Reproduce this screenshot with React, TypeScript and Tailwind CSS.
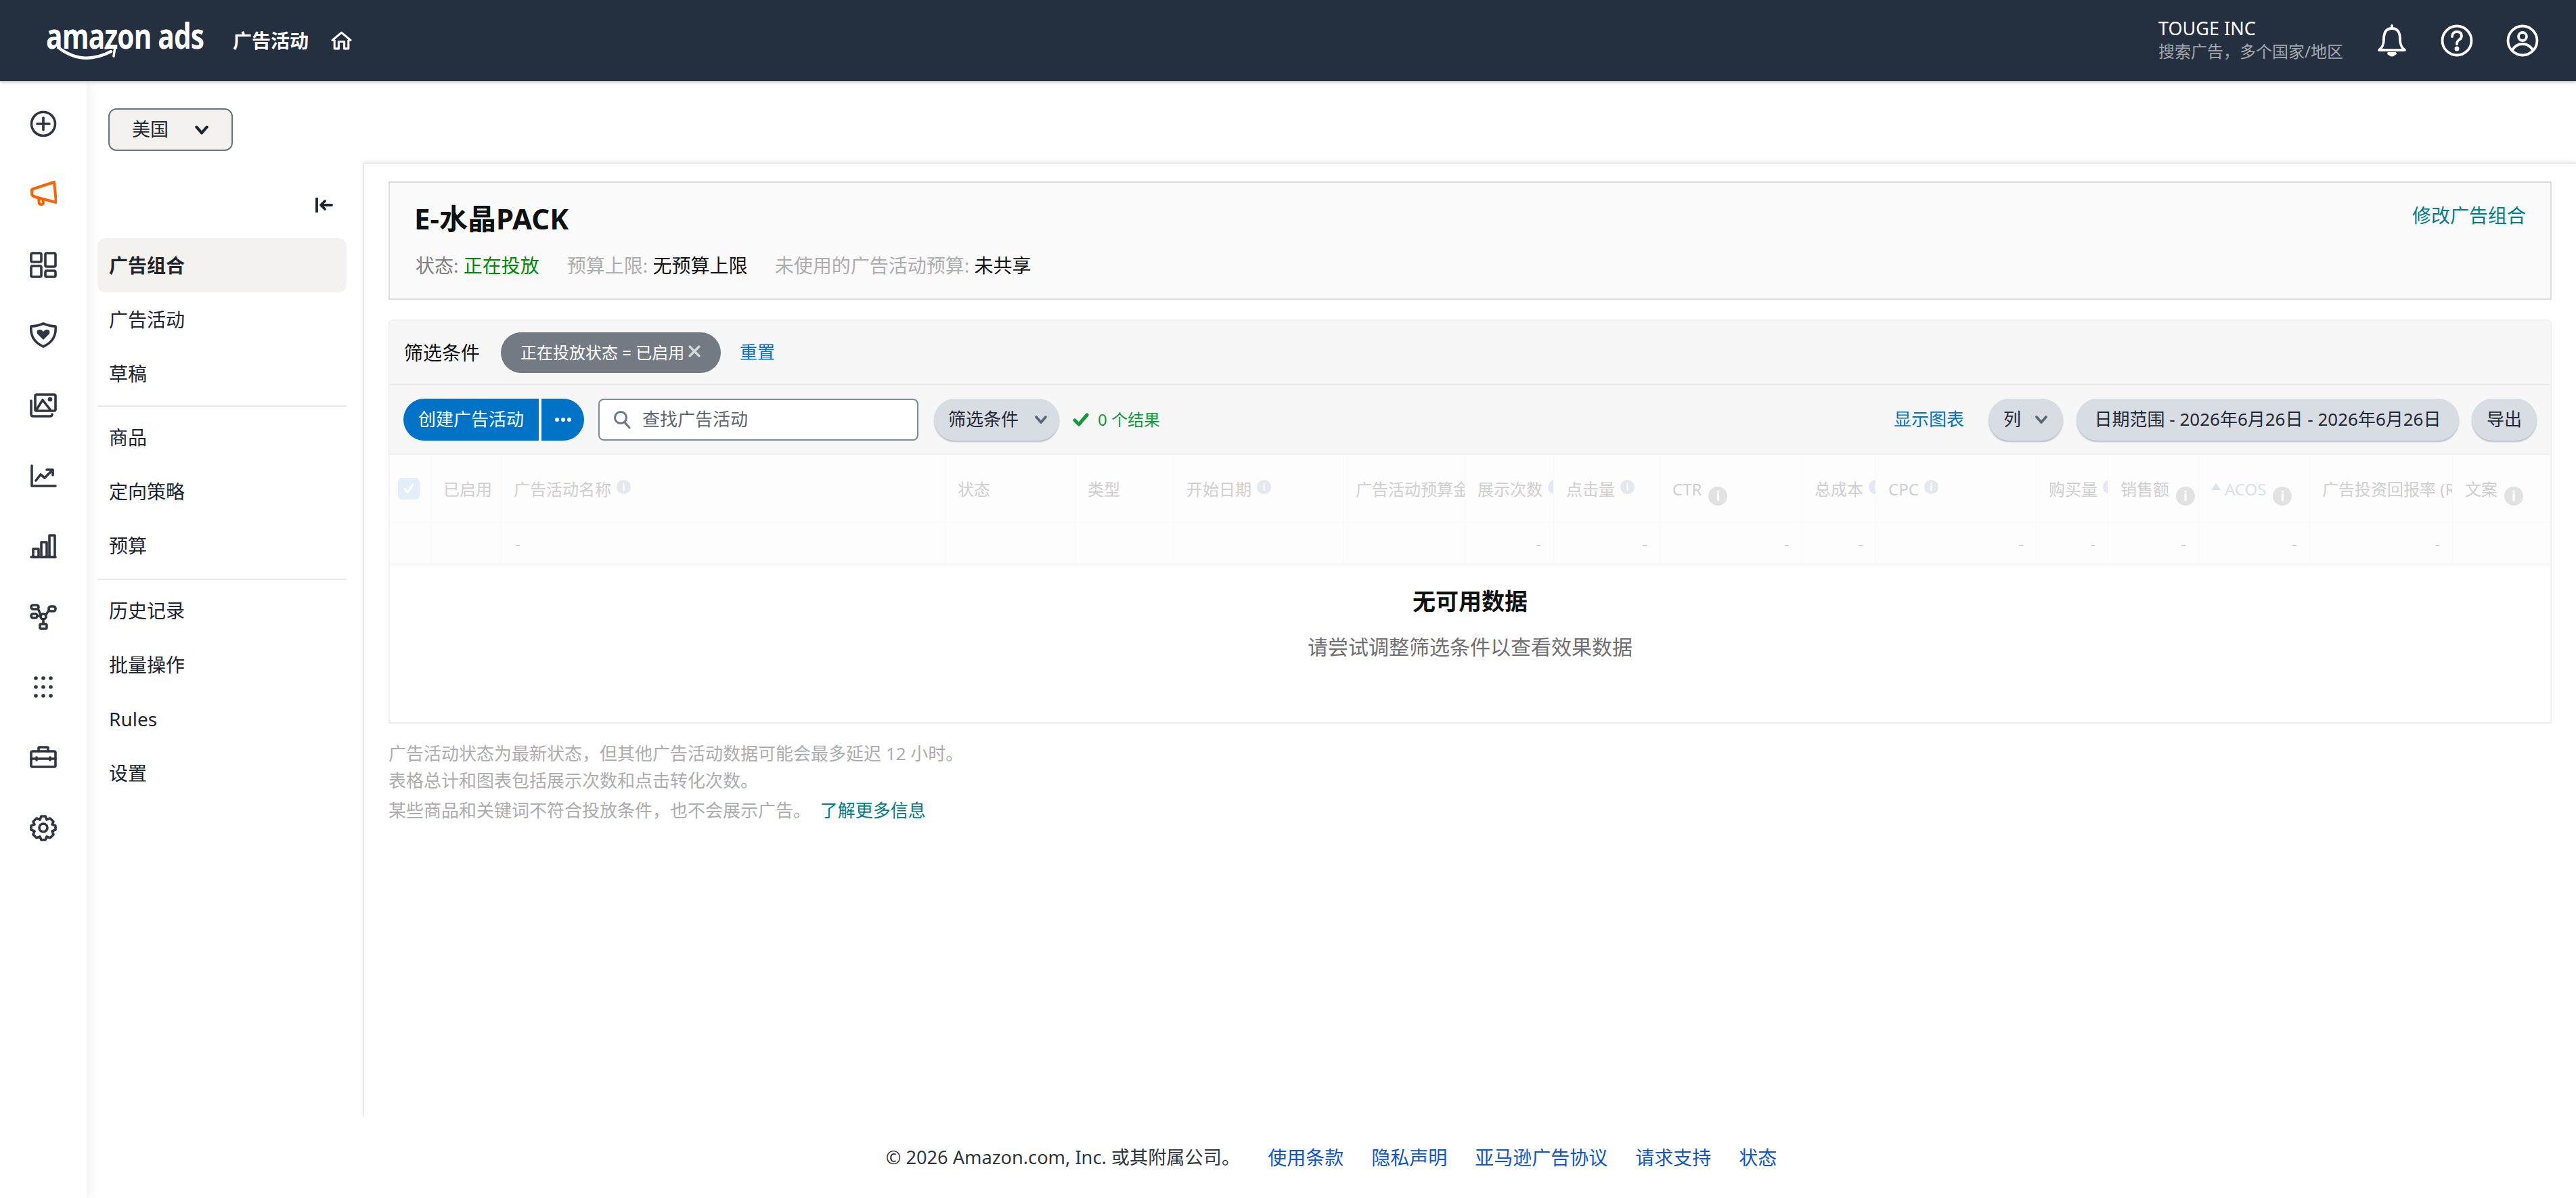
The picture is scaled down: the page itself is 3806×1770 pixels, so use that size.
import React from "react";

const I = ({ children, className = "" }: { children: React.ReactNode; className?: string }) => (
  <svg viewBox="0 0 40 40" fill="none" stroke="currentColor" strokeWidth="3.6" strokeLinecap="round" strokeLinejoin="round" className={"w-[40px] h-[40px] " + className}>
    {children}
  </svg>
);

const railIcons = [
  <I><circle cx="20" cy="20" r="17.5" /><path d="M20 11v18M11 20h18" /></I>,
  <I className="text-[#ff6200]"><path d="M3 16 Q2 13 5 12 L36 2 L39 32 L12 25 L6 23 Q3 22 3 19Z" strokeWidth="4" /><path d="M13 26 L14 34 Q18 37 20 33 L19 27" strokeWidth="4" /></I>,
  <I><rect x="2" y="3" width="15" height="13" rx="2" /><rect x="23" y="3" width="15" height="20" rx="2" /><rect x="2" y="22" width="15" height="16" rx="2" /><rect x="23" y="29" width="15" height="9" rx="2" /></I>,
  <I><path d="M20 3 Q29 7 38 7 Q40 28 20 37 Q0 28 2 7 Q11 7 20 3Z" /><path d="M20 27 L11 18 Q9 12 15 12 Q18 12 20 15 Q22 12 25 12 Q31 12 29 18Z" fill="currentColor" stroke="none" /></I>,
  <I><rect x="8" y="4" width="30" height="24" rx="2" /><path d="M2 13 V33 Q2 36 5 36 H30 Q33 36 33 33" /><path d="M10 26 L19 12 L30 26" /><circle cx="30" cy="11" r="1.5" fill="currentColor" /></I>,
  <I><path d="M3 5 V35 H38" /><path d="M9 27 L16 18 L22 23 L33 12" /><path d="M25 11 H34 V19" /></I>,
  <I><path d="M2 36 H38" /><rect x="5" y="24" width="8" height="12" /><rect x="17" y="14" width="8" height="22" /><rect x="29" y="4" width="8" height="32" /></I>,
  <I><rect x="2" y="3" width="11" height="6" rx="3" /><rect x="2" y="16" width="9" height="6" rx="3" /><rect x="28" y="5" width="10" height="7" rx="3" /><rect x="15" y="31" width="10" height="7" rx="2" /><circle cx="20" cy="20" r="4" /><path d="M12 8 L16 17 M11 19 H16 M28 11 L24 17 M20 24 V31" /></I>,
  <I>{[9, 20, 31].flatMap((x) => [7, 20, 33].map((y) => <circle key={x + "-" + y} cx={x} cy={y} r="2.8" fill="currentColor" stroke="none" />))}</I>,
  <I><rect x="2" y="11" width="36" height="23" rx="2" /><path d="M13 11 V6 Q13 5 14 5 H26 Q27 5 27 6 V11" /><path d="M2 22 H38" /><path d="M10 20v4M30 20v4" /></I>,
  <I><circle cx="20" cy="20" r="6" /><path d="M17 3 H23 L25 8 L30 6 L35 11 L33 15 L38 17 V23 L33 25 L35 30 L30 35 L25 33 L23 38 H17 L15 33 L10 35 L5 30 L7 25 L2 23 V17 L7 15 L5 11 L10 6 L15 8Z" /></I>,
];

const navGroups = [["广告组合", "广告活动", "草稿"], ["商品", "定向策略", "预算"], ["历史记录", "批量操作", "Rules", "设置"]];

const Chevron = ({ className = "" }: { className?: string }) => (
  <svg viewBox="0 0 20 14" fill="none" stroke="currentColor" strokeWidth="3.8" strokeLinecap="round" strokeLinejoin="round" className={className}>
    <path d="M3 3 L10 11 L17 3" />
  </svg>
);

const Info = ({ big }: { big?: boolean }) =>
  big ? (
    <span className="ml-[10px] mt-[12px] w-[28px] h-[28px] shrink-0 rounded-full bg-[#e2e2e2] text-white text-[20px] font-bold leading-[28px] text-center">i</span>
  ) : (
    <span className="ml-[8px] mt-[2px] w-[21px] h-[21px] shrink-0 rounded-full bg-[#e5e8ee] text-white text-[15px] font-bold leading-[21px] text-center">i</span>
  );

type Col = { w: string; label?: string; info?: "s" | "b"; dash?: "l" | "r"; sort?: boolean };
const cols: Col[] = [
  { w: "w-[61px]" },
  { w: "w-[104px]", label: "已启用" },
  { w: "w-[656px]", label: "广告活动名称", info: "s", dash: "l" },
  { w: "w-[192px]", label: "状态" },
  { w: "w-[146px]", label: "类型" },
  { w: "w-[250px]", label: "开始日期", info: "s" },
  { w: "w-[180px]", label: "广告活动预算金额" },
  { w: "w-[131px]", label: "展示次数", info: "s", dash: "r" },
  { w: "w-[157px]", label: "点击量", info: "s", dash: "r" },
  { w: "w-[210px]", label: "CTR", info: "b", dash: "r" },
  { w: "w-[109px]", label: "总成本", info: "s", dash: "r" },
  { w: "w-[237px]", label: "CPC", info: "s", dash: "r" },
  { w: "w-[106px]", label: "购买量", info: "s", dash: "r" },
  { w: "w-[134px]", label: "销售额", info: "b", dash: "r" },
  { w: "w-[164px]", label: "ACOS", info: "b", dash: "r", sort: true },
  { w: "w-[211px]", label: "广告投资回报率 (ROAS)", dash: "r" },
  { w: "w-[144px]", label: "文案", info: "b" },
];

const pill = "h-[62px] rounded-full bg-[#d8dde3] shadow-[0_2px_2px_rgba(100,110,125,0.45)] flex items-center text-[26px] text-[#1f2937] whitespace-nowrap";

export default function App() {
  return (
    <div className="w-[3806px] h-[1770px] overflow-hidden bg-white flex flex-col font-['Noto_Sans','Noto_Sans_CJK_SC',sans-serif] text-[28px] text-[#1c2430]">
      <header className="h-[120px] shrink-0 bg-[#242f40] text-white flex items-center relative z-20 shadow-[0_3px_4px_rgba(0,0,0,0.13)] border-b-0">
        <div className="relative w-[230px] h-[60px] ml-[68px] -mt-[1px]">
          <span className="absolute left-0 -top-[9px] font-['Open_Sans',sans-serif] font-bold text-[52px] leading-[62px] tracking-[-0.02em] origin-left scale-x-[0.78] whitespace-nowrap">amazon ads</span>
          <svg viewBox="0 0 90 24" fill="none" className="absolute left-[16px] top-[38px] w-[90px] h-[24px]">
            <path d="M2 2 Q38 30 80 8" stroke="white" strokeWidth="4.5" strokeLinecap="round" />
            <path d="M72 3 L86 1 L84 15" stroke="white" strokeWidth="3.5" strokeLinecap="round" strokeLinejoin="round" />
          </svg>
        </div>
        <span className="ml-[46px] font-semibold text-[28px]">广告活动</span>
        <svg viewBox="0 0 30 27" fill="none" stroke="white" strokeWidth="3" strokeLinejoin="round" className="ml-[33px] w-[31px] h-[28px]">
          <path d="M2 13 L15 2 L28 13 H25 V25 H19 V15 H11 V25 H5 V13Z" />
        </svg>
        <div className="ml-auto flex flex-col mr-[48px] -mt-[2px]">
          <span className="text-[27px] leading-[34px]">TOUGE INC</span>
          <span className="text-[24px] leading-[34px] text-[#a3a8af]">搜索广告，多个国家/地区</span>
        </div>
        <svg viewBox="0 0 48 48" fill="none" stroke="white" strokeWidth="3.8" strokeLinejoin="round" strokeLinecap="round" className="w-[48px] h-[48px] mr-[48px]">
          <path d="M24 2 V6 M24 6 C14 6 12 14 12 22 C12 30 10 34 5 38 H43 C38 34 36 30 36 22 C36 14 34 6 24 6Z" />
          <path d="M19 43 Q24 48 29 43Z" fill="white" />
        </svg>
        <svg viewBox="0 0 48 48" fill="none" stroke="white" strokeWidth="3.8" strokeLinecap="round" className="w-[48px] h-[48px] mr-[49px]">
          <circle cx="24" cy="24" r="21.5" />
          <path d="M17 18 Q17 11 24 11 Q31 11 31 17 Q31 21 27 23 Q24 25 24 29" />
          <circle cx="24" cy="36" r="1.6" fill="white" />
        </svg>
        <svg viewBox="0 0 48 48" fill="none" stroke="white" strokeWidth="3.8" strokeLinecap="round" className="w-[48px] h-[48px] mr-[55px]">
          <circle cx="24" cy="24" r="21.5" />
          <circle cx="24" cy="18" r="6" />
          <path d="M9 38 Q14 29 24 29 Q34 29 39 38" />
        </svg>
      </header>

      <div className="flex-1 flex min-h-0">
        <aside className="w-[128px] shrink-0 relative z-10 bg-white shadow-[5px_0_14px_rgba(0,0,0,0.06)] flex flex-col items-center pt-[43px] gap-[64px] text-[#2f3640]">
          {railIcons.map((icon, i) => (
            <React.Fragment key={i}>{icon}</React.Fragment>
          ))}
        </aside>

        <div className="flex-1 flex flex-col min-w-0">
          <div className="h-[120px] shrink-0 pt-[40px] pl-[32px]">
            <button className="w-[184px] h-[63px] bg-[#f3f2ef] border-2 border-[#6b7280] rounded-[12px] flex items-center pl-[33px] text-[27px]">
              美国
              <Chevron className="ml-[38px] w-[22px] h-[16px] text-[#1c2430]" />
            </button>
          </div>

          <div className="flex-1 flex min-h-0">
            <nav className="w-[408px] shrink-0 pl-[16px] pr-[24px]">
              <div className="h-[112px] flex justify-end items-start pt-[52px] pr-[20px]">
                <svg viewBox="0 0 26 22" fill="none" stroke="#1c2430" strokeWidth="3.8" strokeLinecap="round" strokeLinejoin="round" className="w-[26px] h-[22px]">
                  <path d="M2 1 V21" />
                  <path d="M24 11 H9 M14 5 L8 11 L14 17" />
                </svg>
              </div>
              {navGroups.map((g, gi) => (
                <div key={gi}>
                  {gi > 0 && <div className={"h-[2px] bg-[#e6e6e6] mb-[5px] " + (gi === 1 ? "mt-[7px]" : "mt-[9px]")} />}
                  {g.map((t) => (
                    <div key={t} className={"h-[80px] flex items-center pl-[17px] pb-[1px] rounded-[12px] " + (t === "广告组合" ? "bg-[#f3f2ee] font-bold" : "")}>
                      {t}
                    </div>
                  ))}
                </div>
              ))}
            </nav>

            <main className="flex-1 min-w-0 flex flex-col border-l-2 border-t-2 border-[#ececec] shadow-[0_-2px_5px_rgba(0,0,0,0.06)] pt-[26px] pl-[36px] pr-[36px]">
              <section className="h-[175px] shrink-0 bg-[#fafafa] border-2 border-[#dcdcdc] pl-[36px] pr-[36px] flex justify-between">
                <div>
                  <h1 className="mt-[26px] text-[42px] leading-[54px] font-bold text-[#0f1111]">E-水晶PACK</h1>
                  <div className="mt-[22px] flex leading-[40px] whitespace-nowrap">
                    <span className="text-[#7f7f7f] ml-[2px]">状态: <span className="text-[#008a00]">正在投放</span></span>
                    <span className="ml-[41px] text-[#adadad]">预算上限: <span className="text-[#0f1111]">无预算上限</span></span>
                    <span className="ml-[40px] text-[#adadad]">未使用的广告活动预算: <span className="text-[#0f1111]">未共享</span></span>
                  </div>
                </div>
                <a className="mt-[28px] h-[40px] leading-[40px] text-[#007d8a]">修改广告组合</a>
              </section>

              <section className="mt-[29px] h-[597px] shrink-0 border-2 border-t-2 border-[#f0f0f0] rounded-t-[6px] flex flex-col">
                <div className="h-[95px] shrink-0 bg-[#f7f7f7] border-b-2 border-[#e8e8e8] flex items-center pl-[21px]">
                  <span className="text-[28px] text-[#0f1111]">筛选条件</span>
                  <span className="ml-[31px] h-[60px] w-[325px] rounded-full bg-[#737a82] text-white text-[24px] flex items-center pl-[29px] whitespace-nowrap">
                    正在投放状态 = 已启用
                    <svg viewBox="0 0 16 16" stroke="#d5d8dc" strokeWidth="3.2" strokeLinecap="round" className="ml-[6px] -mt-[4px] w-[18px] h-[18px]">
                      <path d="M2 2 L14 14 M14 2 L2 14" />
                    </svg>
                  </span>
                  <a className="ml-[28px] text-[26px] text-[#0073c7]">重置</a>
                </div>

                <div className="h-[103px] shrink-0 bg-[#f7f7f7] border-b-2 border-[#f0f0f0] flex items-center pl-[20px] pr-[20px]">
                  <button className="w-[200px] h-[62px] bg-[#0073c7] text-white text-[26px] rounded-l-full">创建广告活动</button>
                  <button className="ml-[4px] w-[63px] h-[62px] bg-[#0073c7] text-white rounded-r-full flex items-center justify-center gap-[3px]">
                    <span className="w-[6px] h-[6px] rounded-full bg-white" />
                    <span className="w-[6px] h-[6px] rounded-full bg-white" />
                    <span className="w-[6px] h-[6px] rounded-full bg-white" />
                  </button>
                  <div className="ml-[21px] w-[473px] h-[62px] bg-white border-2 border-[#7f8a9c] rounded-[8px] flex items-center pl-[20px] text-[26px] text-[#5b6675]">
                    <svg viewBox="0 0 26 28" fill="none" stroke="#6b7685" strokeWidth="3" strokeLinecap="round" className="w-[26px] h-[28px]">
                      <circle cx="11" cy="11" r="8.5" />
                      <path d="M17 18 L24 26" />
                    </svg>
                    <span className="ml-[17px]">查找广告活动</span>
                  </div>
                  <div className={pill + " ml-[23px] w-[185px] pl-[21px]"}>
                    筛选条件
                    <Chevron className="ml-[23px] w-[20px] h-[14px] text-[#5b6675]" />
                  </div>
                  <svg viewBox="0 0 24 22" fill="none" stroke="#13993a" strokeWidth="5" strokeLinecap="round" strokeLinejoin="round" className="ml-[20px] w-[24px] h-[22px]">
                    <path d="M3 12 L9 18 L21 4" />
                  </svg>
                  <span className="ml-[13px] text-[24px] text-[#13993a] whitespace-nowrap">0 个结果</span>

                  <a className="ml-auto text-[26px] text-[#0073c7]">显示图表</a>
                  <div className={pill + " ml-[36px] w-[110px] pl-[22px]"}>
                    列
                    <Chevron className="ml-[20px] w-[20px] h-[14px] text-[#5b6675]" />
                  </div>
                  <div className={pill + " ml-[20px] w-[565px] justify-center"}>日期范围 - 2026年6月26日 - 2026年6月26日</div>
                  <div className={pill + " ml-[19px] w-[96px] justify-center"}>导出</div>
                </div>

                <div className="h-[164px] shrink-0 flex flex-col bg-[#fdfdfd] border-b-[4px] border-[#f9f9f9] text-[24px] text-[#cfcfcf]">
                  <div className="h-[101px] flex border-b-2 border-[#f9f9f9]">
                    {cols.map((c, i) => (
                      <div key={i} className={c.w + " shrink-0 overflow-hidden border-r border-[#f9f9f9] flex items-start pt-[35px] " + (i === 0 ? "pl-[12px]" : "pl-[18px]")}>
                        {i === 0 && (
                          <span className="-mt-[1px] w-[32px] h-[32px] rounded-[6px] bg-[#e4eef8] flex items-center justify-center">
                            <svg viewBox="0 0 20 20" fill="none" stroke="white" strokeWidth="3" strokeLinecap="round" strokeLinejoin="round" className="w-[20px] h-[20px]">
                              <path d="M4 10 L8 16 L16 4" />
                            </svg>
                          </span>
                        )}
                        {c.sort && <span className="mr-[6px] mt-[7px] w-0 h-0 shrink-0 border-x-[7px] border-x-transparent border-b-[10px] border-b-[#dbe3ec]" />}
                        {c.label && <span className={"whitespace-nowrap leading-[32px] " + (c.sort ? "text-[#d9e2ee]" : "")}>{c.label}</span>}
                        {c.info === "s" && <Info />}
                        {c.info === "b" && <Info big />}
                      </div>
                    ))}
                  </div>
                  <div className="flex-1 flex">
                    {cols.map((c, i) => (
                      <div key={i} className={c.w + " shrink-0 border-r border-[#f9f9f9] flex items-center " + (c.dash === "r" ? "justify-end pr-[18px]" : "pl-[20px]")}>
                        {c.dash && "-"}
                      </div>
                    ))}
                  </div>
                </div>

                <div className="flex-1 flex flex-col items-center">
                  <div className="mt-[30px] text-[34px] leading-[44px] font-bold text-[#0f1111]">无可用数据</div>
                  <div className="mt-[25px] text-[30px] leading-[42px] text-[#6f6f6f]">请尝试调整筛选条件以查看效果数据</div>
                </div>
              </section>

              <div className="mt-[24px] text-[26px] leading-[40px] text-[#adadad]">
                <p>广告活动状态为最新状态，但其他广告活动数据可能会最多延迟 12 小时。</p>
                <p>表格总计和图表包括展示次数和点击转化次数。</p>
                <p className="mt-[4px]">某些商品和关键词不符合投放条件，也不会展示广告。 <a className="ml-[7px] text-[#007d8a]">了解更多信息</a></p>
              </div>
            </main>
          </div>

          <footer className="h-[120px] shrink-0 flex items-center justify-center gap-[41px] text-[28px] text-[#2f3640]">
            <span className="text-[27.2px]">© 2026 Amazon.com, Inc. 或其附属公司。</span>
            {["使用条款", "隐私声明", "亚马逊广告协议", "请求支持", "状态"].map((t) => (
              <a key={t} className="text-[#1056c6]">{t}</a>
            ))}
          </footer>
        </div>
      </div>
    </div>
  );
}
